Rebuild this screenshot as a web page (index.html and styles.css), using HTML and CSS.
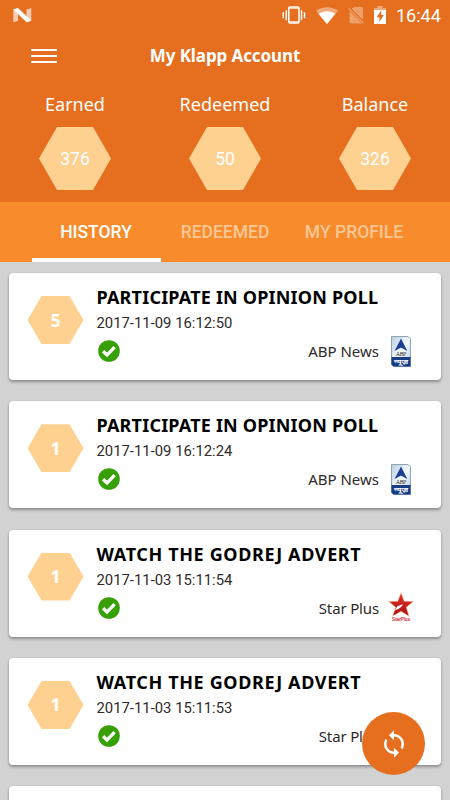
FILE: index.html
```html
<!DOCTYPE html>
<html lang="en">
<head>
<meta charset="utf-8">
<title>My Klapp Account</title>
<link rel="stylesheet" href="styles.css">
</head>
<body>
<svg width="0" height="0" class="defs" aria-hidden="true">
  <defs>
    <linearGradient id="silver" x1="0" y1="0" x2="1" y2="1"><stop offset="0" stop-color="#b9cbe0"/><stop offset=".5" stop-color="#f4f8fc"/><stop offset="1" stop-color="#b4c8df"/></linearGradient>
    <linearGradient id="red" x1="0" y1="0" x2="0" y2="1"><stop offset="0" stop-color="#e3342b"/><stop offset="1" stop-color="#a80d12"/></linearGradient>
    <symbol id="check" viewBox="0 0 22 22"><circle cx="11" cy="11" r="10.8" fill="#37a007"/><path d="M5.100 11.300 9 15 16.700 7.200" fill="none" stroke="#fff" stroke-width="3.300"/></symbol>
    <symbol id="abp" viewBox="0 0 20 31">
      <path d="M.5.5H17l2.500 2.500v27.500H2.500L.5 28.500Z" fill="url(#silver)" stroke="#8fa3b8"/>
      <path d="M.5 21h19v9.500H2.500L.5 28.500Z" fill="#183d86"/>
      <path d="M10 2.500 16.300 15 10 11.500 3.500 15Z" fill="#173f94"/>
      <text x="10" y="19.700" text-anchor="middle" textLength="10" font-family="Liberation Serif, serif" font-size="5.500" fill="#222">ABP</text>
      <text x="10" y="28" text-anchor="middle" textLength="14" lengthAdjust="spacingAndGlyphs" font-family="Noto Sans, sans-serif" font-size="7" font-weight="700" fill="#fff">न्यूज़</text>
    </symbol>
    <symbol id="star" viewBox="0 0 26 31">
      <path d="M13 1.500 16 9.500 24.500 9.700 18 15.300 20.500 23.500 13 19 5.200 23.500 8 15.300 1.500 9.700 10 9.500Z" fill="url(#red)" stroke="#ffc9ab" stroke-width="1.500" paint-order="stroke"/>
      <path d="M7 18.500C11 17 13.500 15.500 15 12.300L9.200 14.200 8.500 15.800Z" fill="#fff"/>
      <text x="13" y="28.800" text-anchor="middle" textLength="18" font-family="Liberation Sans, sans-serif" font-size="4.500" fill="#d5202a" stroke="#d5202a" stroke-width=".15">StarPlus</text>
    </symbol>
  </defs>
</svg>
<div class="screen">
  <header class="header">
    <div class="status">
      <svg class="n-logo" width="19" height="15" viewBox="0 0 19 15"><path d="M.3 1.500 5 0V13L.3 14.200ZM13.500 1.500 18.300.3V13L13.500 14.200Z" fill="#f6cbae"/><path d="M.3 1.500 5 0 18.300 12.500 13.500 14.200Z" fill="#fff"/></svg>
      <div class="status-right">
        <svg width="24" height="18" viewBox="0 0 24 18"><g fill="none" stroke="#fff" stroke-width="1.500"><rect x="6.800" y=".9" width="10.200" height="16.200" rx="1"/><path d="M4.300 4.300v10M19.500 4.300v10M1.300 6.200v6M22.500 6.200v6"/></g><path d="M7 2.200h10M7 15.800h10" stroke="#fff" stroke-width="1"/></svg>
        <svg width="22" height="17" viewBox="0 0 22 17"><path d="M11 17 0 3.800C6-1 16-1 22 3.800Z" fill="#f1a87a"/><path d="M11 17 2.500 6.800C7.200 3.300 14.800 3.300 19.500 6.800Z" fill="#fff"/></svg>
        <svg width="16" height="17" viewBox="0 0 16 17"><path d="M6 0h7.500q1.500 0 1.500 1.500V13L3.800 1.800ZM2 4.500 14 16.500H3q-1.500 0-1.500-1.500V5Z" fill="#ef9f69"/><path d="m.8 1.500 14.700 14.700" stroke="#ef9f69" stroke-width="1.300"/></svg>
        <svg width="12" height="18" viewBox="0 0 12 18"><path d="M3.500 0h5v2H12v4H0V2h3.500Z" fill="#f1a87a"/><path d="M0 4h12v14H0Z" fill="#fff"/><path d="M7.200 4.500 2.600 11.200H5.400V16L9.800 9H7.200Z" fill="#e56f1e"/></svg>
        <span class="clock">16:44</span>
      </div>
    </div>
    <div class="appbar">
      <div class="menu"><i></i><i></i><i></i></div>
      <h1>My Klapp Account</h1>
    </div>
    <div class="stats">
      <div class="stat"><span>Earned</span><div class="hex">376</div></div>
      <div class="stat"><span>Redeemed</span><div class="hex">50</div></div>
      <div class="stat"><span>Balance</span><div class="hex">326</div></div>
    </div>
  </header>
  <nav class="tabs"><div class="tab active">HISTORY</div><div class="tab">REDEEMED</div><div class="tab">MY PROFILE</div></nav>
  <main class="list">
    <article class="card">
      <div class="hex small">5</div>
      <div class="body"><h2 class="poll">PARTICIPATE IN OPINION POLL</h2><time>2017-11-09 16:12:50</time>
      <div class="foot"><svg class="ok"><use href="#check"/></svg><span>ABP News</span><svg class="abp"><use href="#abp"/></svg></div></div>
    </article>
    <article class="card">
      <div class="hex small">1</div>
      <div class="body"><h2 class="poll">PARTICIPATE IN OPINION POLL</h2><time>2017-11-09 16:12:24</time>
      <div class="foot"><svg class="ok"><use href="#check"/></svg><span>ABP News</span><svg class="abp"><use href="#abp"/></svg></div></div>
    </article>
    <article class="card">
      <div class="hex small">1</div>
      <div class="body"><h2 class="watch">WATCH THE GODREJ ADVERT</h2><time>2017-11-03 15:11:54</time>
      <div class="foot"><svg class="ok"><use href="#check"/></svg><span class="star-name">Star Plus</span><svg class="star"><use href="#star"/></svg></div></div>
    </article>
    <article class="card">
      <div class="hex small">1</div>
      <div class="body"><h2 class="watch">WATCH THE GODREJ ADVERT</h2><time>2017-11-03 15:11:53</time>
      <div class="foot"><svg class="ok"><use href="#check"/></svg><span class="star-name">Star Plus</span><svg class="star"><use href="#star"/></svg></div></div>
    </article>
    <article class="card"></article>
  </main>
  <div class="fab"><svg width="30" height="30" viewBox="0 0 24 24" fill="#fff"><path d="M12 4V1L8 5l4 4V6c3.310 0 6 2.690 6 6 0 1.010-.25 1.970-.7 2.800l1.460 1.460A7.930 7.930 0 0 0 20 12c0-4.420-3.580-8-8-8zm0 14c-3.310 0-6-2.690-6-6 0-1.010.25-1.970.7-2.800L5.240 7.740A7.930 7.930 0 0 0 4 12c0 4.420 3.580 8 8 8v3l4-4-4-4v3z"/></svg></div>
</div>
</body>
</html>
```

FILE: styles.css
```css
* { box-sizing: border-box; }
body { margin: 0; font-family: "Noto Sans", sans-serif; }
.defs { position: absolute; }
svg { display: block; flex: none; }
.screen { position: relative; width: 450px; height: 800px; overflow: hidden; background: #d2d2d2; }
.header { height: 202px; background: #e56f1e; color: #fff; }
.status { height: 31px; display: flex; justify-content: space-between; padding: 0 9px 0 13px; }
.n-logo { margin-top: 8px; }
.status-right { display: flex; align-items: center; gap: 10px; }
.status-right svg { margin-top: -1px; }
.clock { font: 400 18px/31px Roboto, sans-serif; width: 45px; white-space: nowrap; }
.appbar { height: 48px; display: grid; grid-template-columns: 75px 300px 75px; align-items: center; }
.menu { display: grid; gap: 4px; margin-left: 31px; width: 26px; }
.menu i { height: 2px; background: #fff; }
h1 { margin: 0; font-size: 17px; line-height: 49px; font-weight: 700; letter-spacing: -.1px; text-align: center; white-space: nowrap; }
.stats { display: grid; grid-template-columns: repeat(3, 1fr); padding-top: 11px; }
.stat { display: flex; flex-direction: column; align-items: center; font-size: 18px; line-height: 29px; }
.hex { width: 72px; height: 63px; margin-top: 8px; background: #ffd191; color: #fff; clip-path: polygon(25% 0, 75% 0, 100% 50%, 75% 100%, 25% 100%, 0 50%); display: flex; align-items: center; justify-content: center; font: 400 17.500px Roboto, sans-serif; }
.tabs { height: 60px; background: #f88b2b; display: grid; grid-template-columns: 129px 129px 129px; padding-left: 31.500px; }
.tab { height: 60px; font: 500 17.500px/61px Roboto, sans-serif; text-align: center; color: #fcc794; white-space: nowrap; }
.tab.active { color: #fff; box-shadow: inset 0 -4px #fff; }
.list { padding: 11px 9px 0; display: flex; flex-direction: column; gap: 21.300px; }
.card { flex: none; height: 107px; background: #fff; border-radius: 4px; box-shadow: 0 2px 3px rgba(0,0,0,.32), 0 0 1px rgba(0,0,0,.2); display: flex; }
.hex.small { flex: none; width: 56px; height: 48px; margin: 23px 0 0 18.500px; font: 700 17px "Noto Sans", sans-serif; }
.body { flex: 1; padding: 12px 0 0 13px; }
h2 { margin: 0; font-size: 18px; line-height: 25px; font-weight: 700; color: #000; white-space: nowrap; }
.poll { letter-spacing: .19px; }
.watch { letter-spacing: .63px; }
time { display: block; font: 400 14.850px/26px Roboto, sans-serif; color: #302a2a; }
.foot { display: flex; align-items: center; height: 34px; margin-top: -2px; }
.ok { width: 22px; height: 22px; margin-left: 1.500px; }
.foot span { margin-left: auto; font-size: 15px; color: #302a2a; white-space: nowrap; }
.foot .star-name { letter-spacing: -.15px; }
.abp { width: 20px; height: 31px; margin: 0 30px 0 12px; }
.star { width: 26px; height: 31px; margin: 0 27px 0 9px; }
.fab { position: absolute; left: 362px; top: 712px; width: 63px; height: 63px; border-radius: 50%; background: #e56f1e; display: flex; align-items: center; justify-content: center; }
```
